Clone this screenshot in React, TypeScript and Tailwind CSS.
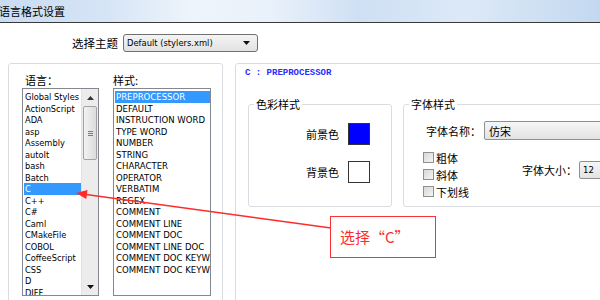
import React from "react";

const langs = [
  "Global Styles",
  "ActionScript",
  "ADA",
  "asp",
  "Assembly",
  "autoIt",
  "bash",
  "Batch",
  "C",
  "C++",
  "C#",
  "Caml",
  "CMakeFile",
  "COBOL",
  "CoffeeScript",
  "CSS",
  "D",
  "DIFF",
];

const styles = [
  "PREPROCESSOR",
  "DEFAULT",
  "INSTRUCTION WORD",
  "TYPE WORD",
  "NUMBER",
  "STRING",
  "CHARACTER",
  "OPERATOR",
  "VERBATIM",
  "REGEX",
  "COMMENT",
  "COMMENT LINE",
  "COMMENT DOC",
  "COMMENT LINE DOC",
  "COMMENT DOC KEYWORD",
  "COMMENT DOC KEYWORD ERROR",
];

function DownTri() {
  return (
    <svg width="7" height="4" viewBox="0 0 7 4">
      <path d="M0 0H7L3.5 4Z" fill="#111" />
    </svg>
  );
}

function UpTri() {
  return (
    <svg width="7" height="4" viewBox="0 0 7 4">
      <path d="M0 4H7L3.5 0Z" fill="#333" />
    </svg>
  );
}

function Check() {
  return (
    <span className="w-[11px] h-[11px] border border-[#8e8f8f] bg-[linear-gradient(135deg,#d8d8d8,#f4f4f4)] shrink-0" />
  );
}

export default function App() {
  return (
    <div className="relative w-[600px] h-[300px] overflow-hidden bg-white font-['DejaVu_Sans_Condensed','DejaVu_Sans','Noto_Sans_CJK_SC',sans-serif] text-black">
      {/* Title bar */}
      <div className="h-[23px] border-b border-[#3a3a3a] bg-[linear-gradient(to_right,#c9dcf2,#d6e5f6_18%,#eef4fb_32%,#e9f1fa_45%,#cfe0f4_60%,#dce9f7_78%,#c3d8f0)] flex items-center">
        <span className="-ml-[1px] text-[11px] leading-[22px] font-['Noto_Sans_CJK_SC',sans-serif]">
          语言格式设置
        </span>
      </div>

      {/* Theme row */}
      <div className="mt-[11px] h-[18px] flex items-center">
        <span className="ml-[72px] text-[11.5px] leading-[18px] font-['Noto_Sans_CJK_SC',sans-serif]">
          选择主题
        </span>
        <div className="ml-[5px] w-[135px] h-[18px] border border-[#707070] rounded-[3px] bg-[linear-gradient(#f4f4f4,#e2e2e2)] flex items-center justify-between pl-[3px] pr-[7px]">
          <span className="text-[9.3px] leading-[16px]">Default (stylers.xml)</span>
          <DownTri />
        </div>
      </div>

      {/* Main area */}
      <div className="mt-[11px] pl-[8px] flex gap-[12px]">
        {/* Left group */}
        <div className="w-[215px] h-[245px] shrink-0 border border-[#d9dde2] rounded-[3px] pl-[13px] pt-[10px] flex gap-[14px]">
          <div className="w-[77px]">
            <div className="pl-[3px] text-[11px] leading-[12px] font-['Noto_Sans_CJK_SC',sans-serif]">
              语言：
            </div>
            <div className="mt-[2px] w-[77px] h-[208px] border border-[#828790] bg-white flex">
              <div className="flex-1 pt-[2px] overflow-hidden">
                {langs.map((l) => (
                  <div
                    key={l}
                    className={
                      l === "C"
                        ? "ml-[1px] h-[11.5px] leading-[11.5px] text-[9.2px] px-[1px] whitespace-nowrap bg-[#3399ff] text-white"
                        : "ml-[1px] h-[11.5px] leading-[11.5px] text-[9.2px] px-[1px] whitespace-nowrap"
                    }
                  >
                    {l}
                  </div>
                ))}
              </div>
              <div className="w-[17px] h-full bg-[#ececec] border-l border-[#e2e2e2] flex flex-col">
                <div className="h-[17px] flex items-center justify-center">
                  <UpTri />
                </div>
                <div className="mx-[1px] h-[54px] border border-[#a3a3a3] rounded-[2px] bg-[linear-gradient(to_right,#f2f2f2,#dcdcdc)] flex flex-col items-center justify-center gap-[1px]">
                  <span className="w-[5px] h-px bg-[#7a7a7a]" />
                  <span className="w-[5px] h-px bg-[#7a7a7a]" />
                  <span className="w-[5px] h-px bg-[#7a7a7a]" />
                </div>
                <div className="flex-1" />
                <div className="h-[17px] flex items-center justify-center">
                  <DownTri />
                </div>
              </div>
            </div>
          </div>
          <div className="w-[98px]">
            <div className="text-[11px] leading-[12px] font-['Noto_Sans_CJK_SC',sans-serif]">
              样式:
            </div>
            <div className="mt-[2px] w-[98px] h-[208px] border border-[#828790] bg-white pt-[2px] overflow-hidden">
              {styles.map((s, i) => (
                <div
                  key={i}
                  className={
                    i === 0
                      ? "ml-[1px] h-[11.5px] leading-[11.5px] text-[9.5px] px-[1px] whitespace-nowrap overflow-hidden bg-[#3399ff] text-white"
                      : "ml-[1px] h-[11.5px] leading-[11.5px] text-[9.5px] px-[1px] whitespace-nowrap overflow-hidden"
                  }
                >
                  {s}
                </div>
              ))}
            </div>
          </div>
        </div>

        {/* Right panel */}
        <div className="w-[400px] h-[260px] shrink-0 border border-[#d9dde2] rounded-[3px] pl-[9px] pt-[2px]">
          <div className="text-[9px] leading-[14px] font-bold text-[#2b2bff] font-['Liberation_Mono',monospace] whitespace-pre">
            C : PREPROCESSOR
          </div>
          <div className="mt-[18px] ml-[3px] flex gap-[11px] font-['Noto_Sans_CJK_SC',sans-serif]">
            <fieldset className="w-[144px] h-[109px] border border-[#d9dde2] rounded-[3px]">
              <legend className="ml-[5px] px-[2px] text-[11px] leading-[12px]">色彩样式</legend>
              <div className="mt-[13px] pr-[21px] flex flex-col items-end">
                <div className="flex items-center gap-[9px]">
                  <span className="text-[11px] leading-[14px]">前景色</span>
                  <span className="w-[22px] h-[22px] border border-[#333] bg-[#0000ff]" />
                </div>
                <div className="mt-[16px] flex items-center gap-[9px]">
                  <span className="text-[11px] leading-[14px]">背景色</span>
                  <span className="w-[22px] h-[22px] border border-[#333] bg-white" />
                </div>
              </div>
            </fieldset>
            <fieldset className="w-[230px] h-[109px] border border-[#d9dde2] rounded-[3px]">
              <legend className="ml-[5px] px-[2px] text-[11px] leading-[12px]">字体样式</legend>
              <div className="mt-[11px] pl-[22px] flex items-center">
                <span className="text-[11px] leading-[14px]">字体名称：</span>
                <div className="ml-[3px] w-[140px] h-[19px] border border-[#8e8f8f] rounded-[2px] bg-[linear-gradient(#f6f6f6,#e3e3e3)] flex items-center pl-[4px]">
                  <span className="text-[11px] leading-[14px]">仿宋</span>
                </div>
              </div>
              <div className="mt-[9px] flex">
                <div className="pl-[19px] w-[118px] flex flex-col">
                  {["粗体", "斜体", "下划线"].map((t) => (
                    <div key={t} className="h-[17px] flex items-center gap-[2px]">
                      <Check />
                      <span className="text-[11px] leading-[14px]">{t}</span>
                    </div>
                  ))}
                </div>
                <div className="mt-[12px] self-start flex items-center">
                  <span className="text-[11px] leading-[14px]">字体大小：</span>
                  <div className="ml-[2px] w-[50px] h-[18px] border border-[#8e8f8f] rounded-[2px] bg-[linear-gradient(#f6f6f6,#e3e3e3)] flex items-center pl-[3px]">
                    <span className="text-[9.5px] leading-[14px] font-['DejaVu_Sans_Condensed','DejaVu_Sans',sans-serif]">12</span>
                  </div>
                </div>
              </div>
            </fieldset>
          </div>
        </div>
      </div>

      {/* Annotation box */}
      <div className="absolute left-[330px] top-[216px] w-[106px] h-[42px] border-[1.5px] border-[#ff3030] bg-white flex items-center pl-[9px]">
        <span className="text-[15px] leading-[18px] text-[#ff2a2a] font-['Noto_Sans_CJK_SC',sans-serif]">
          选择“C”
        </span>
      </div>

      {/* Annotation arrow */}
      <svg
        className="absolute left-0 top-0 pointer-events-none"
        width="600"
        height="300"
        viewBox="0 0 600 300"
      >
        <line x1="331" y1="228" x2="86" y2="194.5" stroke="#ff2a2a" strokeWidth="1.3" />
        <polygon points="76,193 87.5,190 86.3,199" fill="#ff2a2a" />
      </svg>
    </div>
  );
}
